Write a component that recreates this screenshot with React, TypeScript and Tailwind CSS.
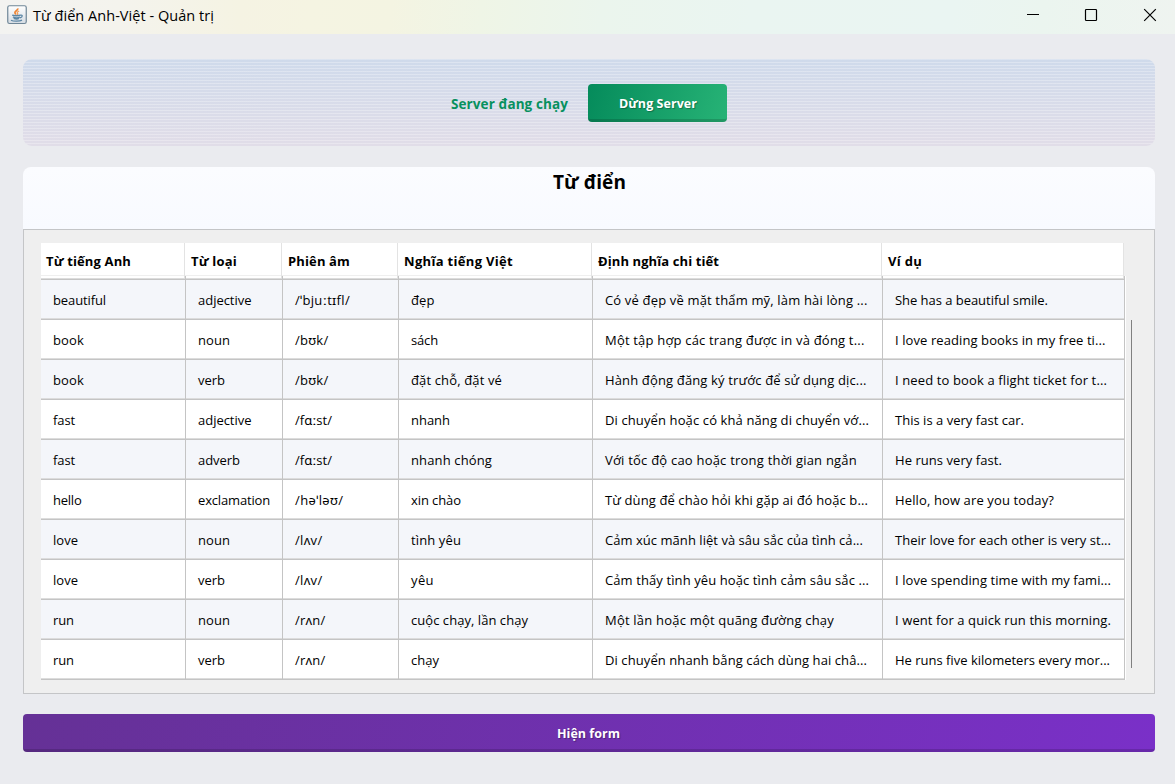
import { useLayoutEffect, useRef } from "react";

type FitProps = { text: string; width: number; className?: string };

/** Tracks a label so that it fills the given advance width. */
function Fit({ text, width, className = "" }: FitProps) {
  const ref = useRef<HTMLSpanElement>(null);
  useLayoutEffect(() => {
    const el = ref.current;
    if (!el) return;
    el.style.letterSpacing = "0px";
    const natural = el.getBoundingClientRect().width;
    el.style.letterSpacing = `${(width - natural) / Array.from(text).length}px`;
  }, [text, width]);
  return (
    <span ref={ref} className={`inline-block whitespace-pre ${className}`}>
      {text}
    </span>
  );
}

type Cell = [string, number];

const headers: Cell[] = [
  ["Từ tiếng Anh", 85],
  ["Từ loại", 46],
  ["Phiên âm", 62],
  ["Nghĩa tiếng Việt", 109],
  ["Định nghĩa chi tiết", 121],
  ["Ví dụ", 34],
];

const rows: Cell[][] = [
  [["beautiful", 53], ["adjective", 53.5], ["/ˈbjuːtɪfl/", 55], ["đẹp", 23.5], ["Có vẻ đẹp về mặt thẩm mỹ, làm hài lòng ...", 262.5], ["She has a beautiful smile.", 153]],
  [["book", 31], ["noun", 32], ["/bʊk/", 33.5], ["sách", 27], ["Một tập hợp các trang được in và đóng t...", 259.5], ["I love reading books in my free ti...", 210.5]],
  [["book", 31], ["verb", 27], ["/bʊk/", 33.5], ["đặt chỗ, đặt vé", 91], ["Hành động đăng ký trước để sử dụng dịc...", 261.5], ["I need to book a flight ticket for t...", 212]],
  [["fast", 22], ["adjective", 53.5], ["/fɑːst/", 37], ["nhanh", 39], ["Di chuyển hoặc có khả năng di chuyển vớ...", 264], ["This is a very fast car.", 129]],
  [["fast", 22], ["adverb", 42], ["/fɑːst/", 37], ["nhanh chóng", 81], ["Với tốc độ cao hoặc trong thời gian ngắn", 252], ["He runs very fast.", 107]],
  [["hello", 28.5], ["exclamation", 72], ["/həˈləʊ/", 48.5], ["xin chào", 50], ["Từ dùng để chào hỏi khi gặp ai đó hoặc b...", 263], ["Hello, how are you today?", 159]],
  [["love", 25], ["noun", 32], ["/lʌv/", 27.5], ["tình yêu", 50], ["Cảm xúc mãnh liệt và sâu sắc của tình cả...", 258], ["Their love for each other is very st...", 216]],
  [["love", 25], ["verb", 27], ["/lʌv/", 27.5], ["yêu", 23], ["Cảm thấy tình yêu hoặc tình cảm sâu sắc ...", 264], ["I love spending time with my fami...", 216]],
  [["run", 21], ["noun", 32], ["/rʌn/", 30.5], ["cuộc chạy, lần chạy", 117], ["Một lần hoặc một quãng đường chạy", 229], ["I went for a quick run this morning.", 216]],
  [["run", 21], ["verb", 27], ["/rʌn/", 30.5], ["chạy", 28], ["Di chuyển nhanh bằng cách dùng hai châ...", 262], ["He runs five kilometers every mor...", 215]],
];

const headerColumns = "grid grid-cols-[144px_97px_116px_194px_290px_242px]";
const columns = "grid grid-cols-[145px_97px_116px_194px_290px_242px]";

function JavaIcon() {
  return (
    <svg width="20" height="20" viewBox="0 0 20 20" fill="none">
      <defs>
        <linearGradient id="tile" x1="0" y1="0" x2="0" y2="1">
          <stop offset="0" stopColor="#ffffff" />
          <stop offset="1" stopColor="#d5dce3" />
        </linearGradient>
      </defs>
      <rect x="0.75" y="0.75" width="18.5" height="17.75" rx="1.8" fill="url(#tile)" stroke="#6f8697" strokeWidth="1.2" />
      <path d="M10.700 3.400C11.400 5.300 7.600 6 7.900 7.600c.1.900.9 1.200 1.100 2" stroke="#ee8432" strokeWidth="1.700" />
      <path d="M12.100 6c-1.800.8-2.300 1.400-1.500 2.300.4.6.2 1.100-.5 1.500" stroke="#f09a55" strokeWidth="1.200" />
      <path d="M5.200 10.200c1.800.7 6.600.7 8.300 0M5.900 12c1.900.9 5.500.9 7.200 0M6.700 13.400c1.700.7 4 .7 5.500 0M13.500 10.200c2.300-.5 2.400 1.900-.5 2.600M4 15.200c2.300 1.300 8.600 1.300 11-.1" stroke="#5c86a5" strokeWidth="1.300" />
    </svg>
  );
}

function TitleBar() {
  return (
    <header className="flex h-[34px] items-start bg-[linear-gradient(95deg,#f3f3f1_0px,#f4f3ed_120px,#f5f3e3_240px,#f5f4e2_310px,#f4f4e2_390px,#eff5e6_480px,#ebf5ed_600px,#eaf5f1_750px,#eaf5f2_950px,#ebf5ef_1040px,#eff4f0_1175px)] pl-[7px]">
      <div className="pt-[5px]">
        <JavaIcon />
      </div>
      <div className="ml-[6px] h-8 text-[14.5px] leading-8 text-black">
        <Fit text="Từ điển Anh-Việt - Quản trị" width={181} />
      </div>
      <div className="ml-auto flex pt-[8px] pr-[18px] text-black">
        <svg width="14" height="14" viewBox="0 0 14 14" className="mr-[44px]">
          <path d="M1 6.500h12" stroke="currentColor" />
        </svg>
        <svg width="14" height="14" viewBox="0 0 14 14" className="mr-[45px]">
          <rect x="1.500" y="1.500" width="11" height="11" rx="0.800" fill="none" stroke="currentColor" strokeWidth="1.200" />
        </svg>
        <svg width="14" height="14" viewBox="0 0 14 14">
          <path d="M1.200 1.200l11.600 11.600M12.800 1.200L1.200 12.800" stroke="currentColor" strokeWidth="1.200" />
        </svg>
      </div>
    </header>
  );
}

function DictionaryTable() {
  return (
    <div className="mt-[13px] ml-[17px] w-[1085px]">
      <div className={`${headerColumns} h-[33px] w-[1083px] border-b border-[#efefef] bg-white font-bold`}>
        {headers.map(([text, width], i) => (
          <div
            key={text}
            className={`${i === 0 ? "pl-[5px]" : "pl-[6px]"} border-r border-[#e3e3e3] text-[13px] leading-[37px]`}
          >
            <Fit text={text} width={width} />
          </div>
        ))}
      </div>
      <div className="w-[1085px] bg-white">
        <div className={`${columns} h-1 w-[1084px]`}>
          {headers.map(([text]) => (
            <div key={text} className="flex flex-col justify-end border-r border-[#c4c4c4]">
              <div className="h-px bg-[#dcdcdc]" />
              <div className="h-px bg-[#c4c4c4]" />
            </div>
          ))}
        </div>
        {rows.map((row, r) => (
          <div key={r} className={`${columns} h-10 w-[1084px] odd:bg-white even:bg-[#f4f6fa]`}>
            {row.map(([text, width], c) => (
              <div key={c} className="flex flex-col border-r border-[#c4c4c4]">
                <div className="h-[38px] pl-3 text-[13px] leading-[41px]">
                  <Fit text={text} width={width} />
                </div>
                <div className="h-px bg-[#dcdcdc]" />
                <div className="h-px bg-[#c4c4c4]" />
              </div>
            ))}
          </div>
        ))}
      </div>
    </div>
  );
}

export default function App() {
  return (
    <div className="flex h-[784px] w-[1175px] flex-col overflow-hidden bg-[#eaebef] font-['Open_Sans','Noto_Sans',sans-serif] text-black">
      <TitleBar />
      <main className="flex flex-col px-[23px] pt-[25px]">
        <section className="flex h-[87px] w-[1132px] justify-center rounded-[9px] bg-[repeating-linear-gradient(180deg,rgba(255,255,255,0.28)_0px,rgba(255,255,255,0.28)_1px,transparent_1px,transparent_3px),linear-gradient(180deg,#cfdaeb,#e1dde8)] pt-[25px]">
          <div className="mr-5 h-[38px] text-[13.5px] leading-[41px] font-bold text-[#07905f]">
            <Fit text="Server đang chạy" width={117} />
          </div>
          <button className="flex h-[38px] w-[139px] items-start justify-center rounded-[4px] border-b-[3px] border-black/15 bg-[linear-gradient(105deg,#058b5b,#27b376)] bg-origin-border pl-px text-[12.5px] leading-[40px] font-bold text-white [text-shadow:1px_1px_1px_rgba(0,0,0,0.3)]">
            <Fit text="Dừng Server" width={78} />
          </button>
        </section>

        <section className="mt-[21px] w-[1132px]">
          <div className="h-[62px] rounded-t-[8px] bg-[linear-gradient(180deg,#fbfcff,#f8faff)] pl-px text-center text-[19px] leading-[31px] font-bold">
            <Fit text="Từ điển" width={73} />
          </div>
          <div className="flex h-[465px] border border-[#c4c5c7] bg-[#efefef]">
            <DictionaryTable />
            <div className="mt-[90px] ml-[5px] h-[348px] w-px bg-[#808080]" />
          </div>
        </section>

        <button className="mt-5 flex h-[38px] w-[1132px] items-start justify-center rounded-[4px] border-b-[3px] border-black/15 bg-[linear-gradient(100deg,#653196,#7a30c8)] bg-origin-border pr-px text-[12.5px] leading-[40px] font-bold text-white [text-shadow:1px_1px_1px_rgba(0,0,0,0.3)]">
          <Fit text="Hiện form" width={63} />
        </button>
      </main>
    </div>
  );
}
